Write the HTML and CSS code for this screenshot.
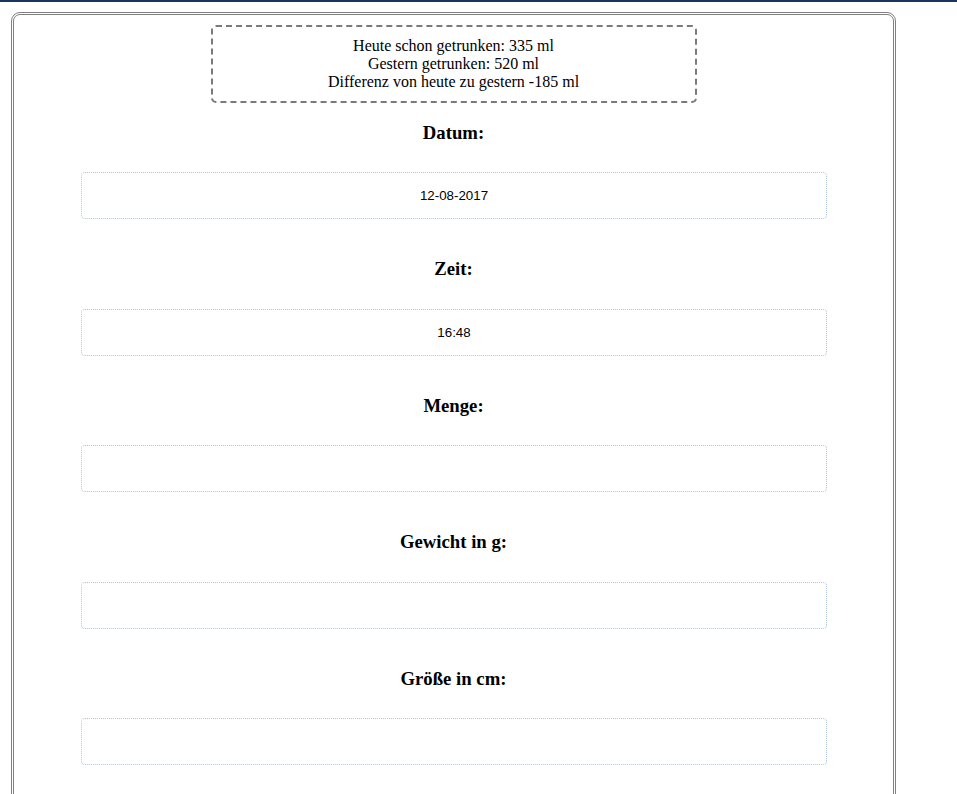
FILE: index.html
```html
<!DOCTYPE html>
<html lang="de">
<head>
<meta charset="utf-8">
<title>Trinkprotokoll</title>
<link rel="stylesheet" href="styles.css">
</head>
<body>
<div class="topbar"></div>
<div class="container">
  <div class="summary">
    Heute schon getrunken: 335 ml<br>
    Gestern getrunken: 520 ml<br>
    Differenz von heute zu gestern -185 ml
  </div>
  <h3 class="label">Datum:</h3>
  <input class="field" type="text" value="12-08-2017">
  <h3 class="label">Zeit:</h3>
  <input class="field" type="text" value="16:48">
  <h3 class="label">Menge:</h3>
  <input class="field" type="text" value="">
  <h3 class="label">Gewicht in g:</h3>
  <input class="field" type="text" value="">
  <h3 class="label">Größe in cm:</h3>
  <input class="field" type="text" value="">
</div>
</body>
</html>
```
FILE: styles.css
```css
html, body {
  margin: 0;
  padding: 0;
  background: #fff;
}
body {
  font-family: "Liberation Serif", "Times New Roman", serif;
  font-size: 16px;
  color: #000;
}
.topbar {
  height: 2px;
  background: #17375e;
}
.container {
  margin: 10px 0 0 11px;
  width: 885px;
  box-sizing: border-box;
  border: 3px double #808080;
  border-radius: 9px;
  padding: 10px 0 40px;
  display: flow-root;
  min-height: 900px;
}
.summary {
  width: 486px;
  box-sizing: border-box;
  margin: 0 auto;
  border: 2px dashed #7a7a7a;
  border-radius: 5px;
  padding: 10px 0 10px;
  text-align: center;
  line-height: 18px;
}
.label {
  font-size: 18.72px;
  font-weight: bold;
  text-align: center;
  margin: 18.72px 0;
  line-height: 21.5px;
}
.field {
  display: block;
  width: 746px;
  height: 47px;
  box-sizing: border-box;
  margin: 29px auto 39px 67px;
  border: 1px dotted #aec3df;
  border-radius: 4px;
  text-align: center;
  font-family: "Liberation Sans", Arial, sans-serif;
  font-size: 13.33px;
  color: #000;
  background: #fff;
  outline: none;
}
```
